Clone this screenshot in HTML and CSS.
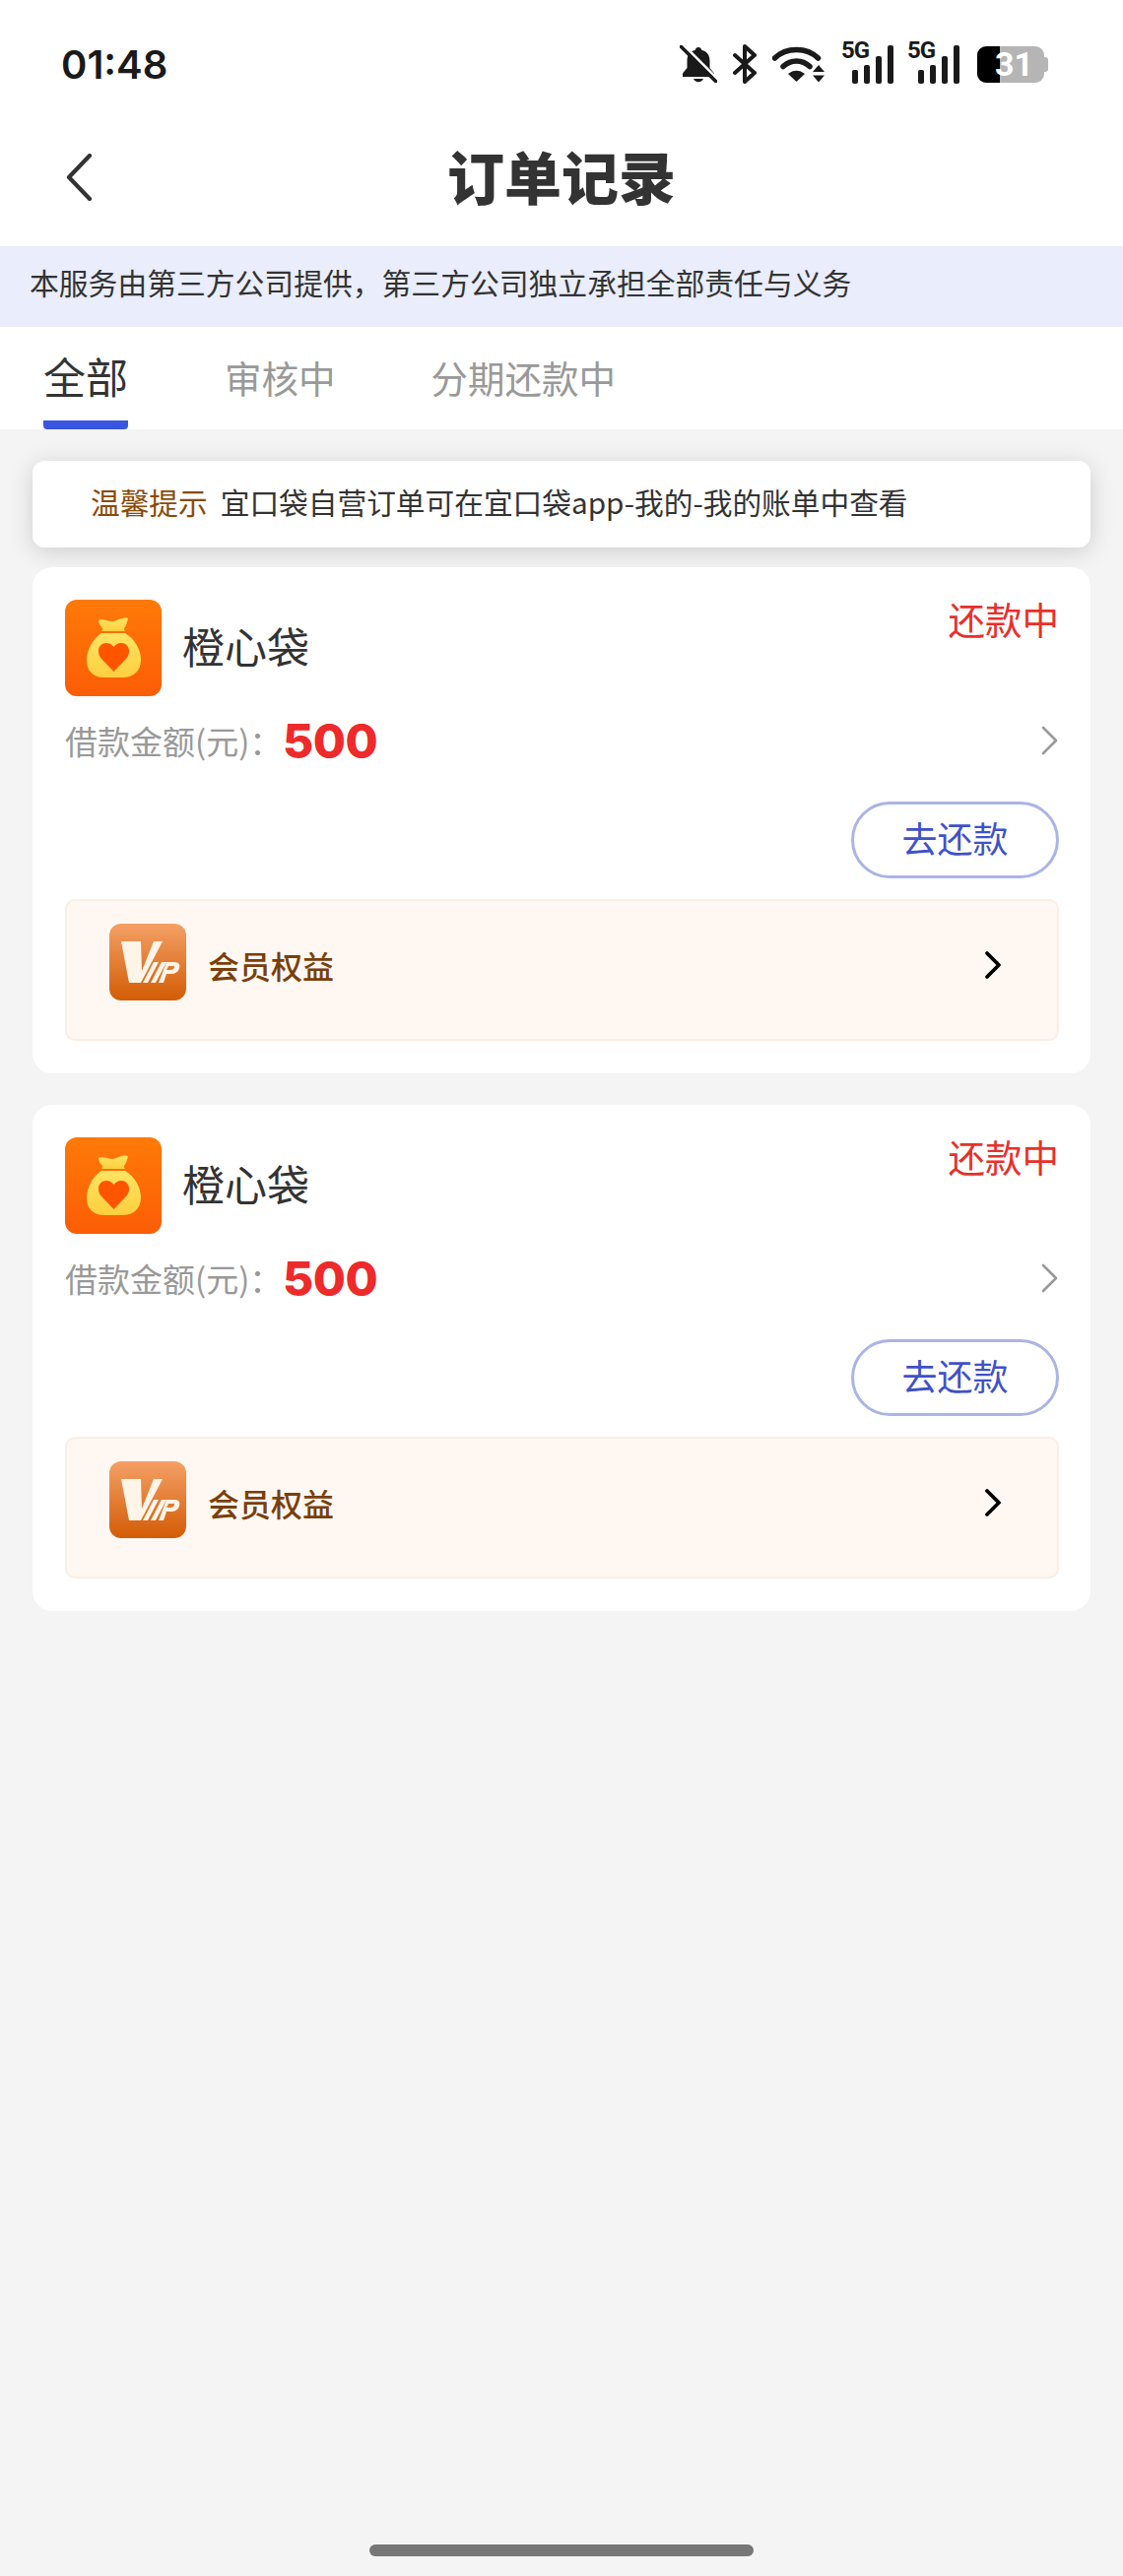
FILE: index.html
```html
<!DOCTYPE html>
<html lang="zh-CN">
<head>
  <meta charset="UTF-8">
  <meta name="viewport" content="width=device-width, initial-scale=1.0">
  <title>订单记录</title>
  <link rel="stylesheet" href="styles.css">
</head>
<body>
  <div class="page">
    <div class="status-bar">
      <span class="time">01:48</span>
      <div class="status-icons">
        <svg class="ic-bell" width="38" height="38" viewBox="0 0 38 38">
          <path d="M19 2c1.800 0 3 1.200 3.200 2.800 5.800 1.500 8.300 5.500 8.300 11.200v7l4.500 5.500V32H3v-3.500L7.500 23v-7c0-5.700 2.500-9.700 8.300-11.200C16 3.200 17.200 2 19 2z" fill="#1a1a1a"/>
          <path d="M14 34h10c-.6 2-2.600 3.200-5 3.200S14.600 36 14 34z" fill="#1a1a1a"/>
          <path d="M3 -1l36 36" stroke="#fff" stroke-width="3"/>
          <path d="M1 1l36 36" stroke="#1a1a1a" stroke-width="3.500" stroke-linecap="round"/>
        </svg>
        <svg class="ic-bt" width="26" height="40" viewBox="0 0 26 40">
          <path d="M3 11l20 18-10 9V2l10 9L3 29" fill="none" stroke="#1a1a1a" stroke-width="4" stroke-linejoin="round" stroke-linecap="round"/>
        </svg>
        <svg class="ic-wifi" width="56" height="38" viewBox="0 0 56 38">
          <path d="M2.500 13C14 1.500 35 1.500 46.500 13" fill="none" stroke="#1a1a1a" stroke-width="5.500" stroke-linecap="round"/>
          <path d="M11 21.500c8-7.500 19-7.500 27 0" fill="none" stroke="#1a1a1a" stroke-width="5.500" stroke-linecap="round"/>
          <path d="M16 29c5-4.500 12-4.500 17 0l-8.500 8z" fill="#1a1a1a"/>
          <path d="M47 20l6 7H41zM47 37.500l-6-7h12z" fill="#1a1a1a"/>
        </svg>
        <div class="signal">
          <span class="net">5G</span>
          <i class="bar b1"></i><i class="bar b2"></i><i class="bar b3"></i><i class="bar b4"></i>
        </div>
        <div class="signal">
          <span class="net">5G</span>
          <i class="bar b1"></i><i class="bar b2"></i><i class="bar b3"></i><i class="bar b4"></i>
        </div>
        <div class="battery"><span class="battery-fill"></span><span class="battery-num">31</span><span class="battery-tip"></span></div>
      </div>
    </div>

    <div class="nav">
      <svg class="back" width="30" height="48" viewBox="0 0 30 48">
        <path d="M26 2L5 24l21 22" fill="none" stroke="#333" stroke-width="4.200" stroke-linecap="round" stroke-linejoin="round"/>
      </svg>
      <h1>订单记录</h1>
    </div>

    <div class="banner">本服务由第三方公司提供，第三方公司独立承担全部责任与义务</div>

    <div class="tabs">
      <div class="tab active">全部</div>
      <div class="tab">审核中</div>
      <div class="tab">分期还款中</div>
    </div>

    <div class="content">
      <div class="notice"><span class="notice-tag">温馨提示</span>宜口袋自营订单可在宜口袋app-我的-我的账单中查看</div>

      <div class="card">
        <div class="card-head">
          <svg class="logo" width="98" height="98" viewBox="0 0 98 98">
            <defs>
              <linearGradient id="logoBg" x1="0" y1="0" x2="0" y2="1"><stop offset="0" stop-color="#ff7a08"/><stop offset="1" stop-color="#fc5d05"/></linearGradient>
              <linearGradient id="bagFill" x1="0" y1="0" x2="0" y2="1"><stop offset="0" stop-color="#ffe462"/><stop offset="1" stop-color="#fdcf3f"/></linearGradient>
            </defs>
            <rect width="98" height="98" rx="12" fill="url(#logoBg)"/>
            <path d="M34 21c4-2 9 1 14 1 4 0 10-5 16-3-1 4-2 8-4 10 0 1 0 2 1 3H37c1-1 1-2 1-3-2-2-4-5-4-8z" fill="url(#bagFill)"/>
            <path d="M37 34h24c10 6 16 17 16 27 0 12-8 18-19 18H40c-11 0-18-6-18-18 0-10 6-21 15-27z" fill="url(#bagFill)"/>
            <path d="M49.500 73L37 60c-2.500-2.800-3-5.500-3-8 0-4.700 3.500-8 8-8 3.500 0 5.800 1.700 7.500 4 1.700-2.300 4-4 7.500-4 4.500 0 8 3.300 8 8 0 2.500-.5 5.200-3 8z" fill="#ff5500"/>
          </svg>
          <span class="card-name">橙心袋</span>
          <span class="card-status">还款中</span>
        </div>
        <div class="amount-row">
          <span class="amount-label">借款金额(元)：</span>
          <span class="amount">500</span>
          <svg class="more" width="18" height="30" viewBox="0 0 18 30"><path d="M2 2l13 13L2 28" fill="none" stroke="#999" stroke-width="2.600" stroke-linecap="round" stroke-linejoin="round"/></svg>
        </div>
        <div class="action-row"><div class="pay-btn">去还款</div></div>
        <div class="member">
          <svg class="vip" width="78" height="78" viewBox="0 0 78 78">
            <defs><linearGradient id="vipBg" x1="0" y1="0" x2="0" y2="1"><stop offset="0" stop-color="#f4a066"/><stop offset="1" stop-color="#d35c05"/></linearGradient></defs>
            <rect width="78" height="78" rx="12" fill="url(#vipBg)"/>
            <path d="M12 18h20l1 30 12-30h9L32 60H20z" fill="#fff4e8"/>
            <path d="M45 39h5L39 60h-5zM53 39h5L47 60h-5z" fill="#fff4e8"/>
            <path d="M58 39h8c5 0 6 3 5 6-1 4-4 6-9 6h-4l-3 9h-5zM60 43l-2 4h4c2 0 4-1 4-3s-1-1-3-1z" fill="#fff4e8" fill-rule="evenodd"/>
          </svg>
          <span class="member-name">会员权益</span>
          <svg class="member-arrow" width="18" height="30" viewBox="0 0 18 30"><path d="M3 3l12 12L3 27" fill="none" stroke="#000" stroke-width="3.800" stroke-linecap="round" stroke-linejoin="round"/></svg>
        </div>
      </div>

      <div class="card">
        <div class="card-head">
          <svg class="logo" width="98" height="98" viewBox="0 0 98 98">
            <rect width="98" height="98" rx="12" fill="url(#logoBg)"/>
            <path d="M34 21c4-2 9 1 14 1 4 0 10-5 16-3-1 4-2 8-4 10 0 1 0 2 1 3H37c1-1 1-2 1-3-2-2-4-5-4-8z" fill="url(#bagFill)"/>
            <path d="M37 34h24c10 6 16 17 16 27 0 12-8 18-19 18H40c-11 0-18-6-18-18 0-10 6-21 15-27z" fill="url(#bagFill)"/>
            <path d="M49.500 73L37 60c-2.500-2.800-3-5.500-3-8 0-4.700 3.500-8 8-8 3.500 0 5.800 1.700 7.500 4 1.700-2.300 4-4 7.500-4 4.500 0 8 3.300 8 8 0 2.500-.5 5.200-3 8z" fill="#ff5500"/>
          </svg>
          <span class="card-name">橙心袋</span>
          <span class="card-status">还款中</span>
        </div>
        <div class="amount-row">
          <span class="amount-label">借款金额(元)：</span>
          <span class="amount">500</span>
          <svg class="more" width="18" height="30" viewBox="0 0 18 30"><path d="M2 2l13 13L2 28" fill="none" stroke="#999" stroke-width="2.600" stroke-linecap="round" stroke-linejoin="round"/></svg>
        </div>
        <div class="action-row"><div class="pay-btn">去还款</div></div>
        <div class="member">
          <svg class="vip" width="78" height="78" viewBox="0 0 78 78">
            <rect width="78" height="78" rx="12" fill="url(#vipBg)"/>
            <path d="M12 18h20l1 30 12-30h9L32 60H20z" fill="#fff4e8"/>
            <path d="M45 39h5L39 60h-5zM53 39h5L47 60h-5z" fill="#fff4e8"/>
            <path d="M58 39h8c5 0 6 3 5 6-1 4-4 6-9 6h-4l-3 9h-5zM60 43l-2 4h4c2 0 4-1 4-3s-1-1-3-1z" fill="#fff4e8" fill-rule="evenodd"/>
          </svg>
          <span class="member-name">会员权益</span>
          <svg class="member-arrow" width="18" height="30" viewBox="0 0 18 30"><path d="M3 3l12 12L3 27" fill="none" stroke="#000" stroke-width="3.800" stroke-linecap="round" stroke-linejoin="round"/></svg>
        </div>
      </div>

      <div class="home-bar"></div>
    </div>
  </div>
</body>
</html>
```

FILE: styles.css
```css
* {
  box-sizing: border-box;
}

body {
  margin: 0;
  font-family: "Noto Sans CJK SC", "Noto Sans", sans-serif;
  color: #333;
  background: #f4f4f4;
}

.page {
  display: flex;
  flex-direction: column;
  width: 1140px;
  height: 2616px;
  overflow: hidden;
}

/* status bar */
.status-bar {
  display: flex;
  align-items: center;
  height: 130px;
  padding: 0 80px 0 62px;
  background: #fff;
}

.time {
  font-family: Inter, sans-serif;
  font-size: 40px;
  font-weight: 600;
  color: #1a1a1a;
}

.status-icons {
  display: flex;
  align-items: center;
  gap: 15px;
  margin-left: auto;
}

.signal {
  position: relative;
  width: 52px;
  height: 40px;
}

.net {
  position: absolute;
  left: -1px;
  top: -6px;
  font-family: "Roboto", sans-serif;
  font-size: 24px;
  font-weight: 700;
  line-height: 24px;
  letter-spacing: -1px;
  color: #1a1a1a;
}

.bar {
  position: absolute;
  bottom: 0;
  width: 6px;
  border-radius: 2px;
  background: #1a1a1a;
}

.b1 { left: 10px; height: 14px; }
.b2 { left: 22px; height: 19px; }
.b3 { left: 34px; height: 28px; }
.b4 { left: 46px; height: 39px; }

.battery {
  position: relative;
  width: 68px;
  height: 37px;
  margin-left: 3px;
  border-radius: 9px;
  background: #b5b5b5;
}

.battery-fill {
  position: absolute;
  left: 0;
  top: 0;
  bottom: 0;
  width: 23px;
  border-radius: 9px 0 0 9px;
  background: #000;
}

.battery-num {
  position: absolute;
  left: 18px;
  top: 0;
  font-family: Roboto, sans-serif;
  font-size: 34px;
  font-weight: 700;
  line-height: 37px;
  color: #fff;
}

.battery-tip {
  position: absolute;
  right: -4px;
  top: 11px;
  width: 4px;
  height: 15px;
  border-radius: 0 3px 3px 0;
  background: #b5b5b5;
}

/* nav */
.nav {
  position: relative;
  display: flex;
  align-items: center;
  justify-content: center;
  height: 120px;
  padding-bottom: 24px;
  background: #fff;
}

.back {
  position: absolute;
  left: 65px;
  top: 26px;
}

.nav h1 {
  margin: 0;
  font-size: 58px;
  font-weight: 900;
  line-height: 1;
  color: #333;
}

.banner {
  height: 82px;
  padding-left: 30px;
  font-size: 29.800px;
  line-height: 72px;
  background: #e9edfc;
}

/* tabs */
.tabs {
  display: flex;
  height: 104px;
  padding-left: 44px;
  background: #fff;
}

.tab {
  height: 104px;
  margin-right: 98px;
  padding-top: 20px;
  font-size: 37.500px;
  line-height: 62px;
  color: #999;
}

.tab:nth-child(2) {
  margin-right: 97px;
}

.tab.active {
  font-size: 43px;
  line-height: 58px;
  color: #333;
  border-bottom: 9px solid #3a55e0;
  border-radius: 0 0 4px 4px;
}

.content {
  position: relative;
  flex: 1;
  padding: 32px 33px 0;
}

.notice {
  display: flex;
  align-items: center;
  height: 88px;
  margin-bottom: 20px;
  padding: 0 0 6px 59px;
  font-size: 29.700px;
  border-radius: 12px;
  background: #fff;
  box-shadow: 0 4px 24px rgba(0, 0, 0, 0.16);
}

.notice-tag {
  margin-right: 13px;
  color: #8a4a08;
}

/* order card */
.card {
  height: 514px;
  margin-bottom: 32px;
  padding: 33px 32px 0 33px;
  border-radius: 20px;
  background: #fff;
}

.card-head {
  display: flex;
  align-items: center;
  height: 98px;
}

.card-name {
  margin-left: 21px;
  padding-bottom: 6px;
  font-size: 43px;
  color: #333;
}

.card-status {
  align-self: flex-start;
  margin-left: auto;
  font-size: 37.500px;
  line-height: 38px;
  color: #e8302c;
}

.amount-row {
  display: flex;
  align-items: center;
  height: 70px;
  margin-top: 10px;
}

.amount-label {
  width: 221px;
  font-size: 33px;
  color: #999;
  white-space: nowrap;
}

.amount {
  font-family: Inter, "Liberation Sans", sans-serif;
  font-size: 48px;
  font-weight: 800;
  letter-spacing: -0.5px;
  color: #ee2a2a;
}

.more {
  margin-left: auto;
}

.action-row {
  display: flex;
  justify-content: flex-end;
  margin-top: 27px;
}

.pay-btn {
  width: 211px;
  height: 78px;
  font-size: 36px;
  line-height: 66px;
  text-align: center;
  color: #3f51c8;
  border: 3px solid #aab4e6;
  border-radius: 39px;
}

.member {
  display: flex;
  align-items: flex-start;
  height: 144px;
  margin-top: 21px;
  padding: 23px 45px 0 43px;
  border: 2px solid #fbeee4;
  border-radius: 10px;
  background: #fff7f1;
}

.member-name {
  margin-left: 22px;
  font-size: 32px;
  font-weight: 500;
  line-height: 84px;
  color: #7a3f0a;
}

.member-arrow {
  margin-left: auto;
  margin-top: 27px;
  margin-right: 11px;
}

.home-bar {
  position: absolute;
  left: 375px;
  bottom: 20px;
  width: 390px;
  height: 12px;
  border-radius: 6px;
  background: #777;
}
```
